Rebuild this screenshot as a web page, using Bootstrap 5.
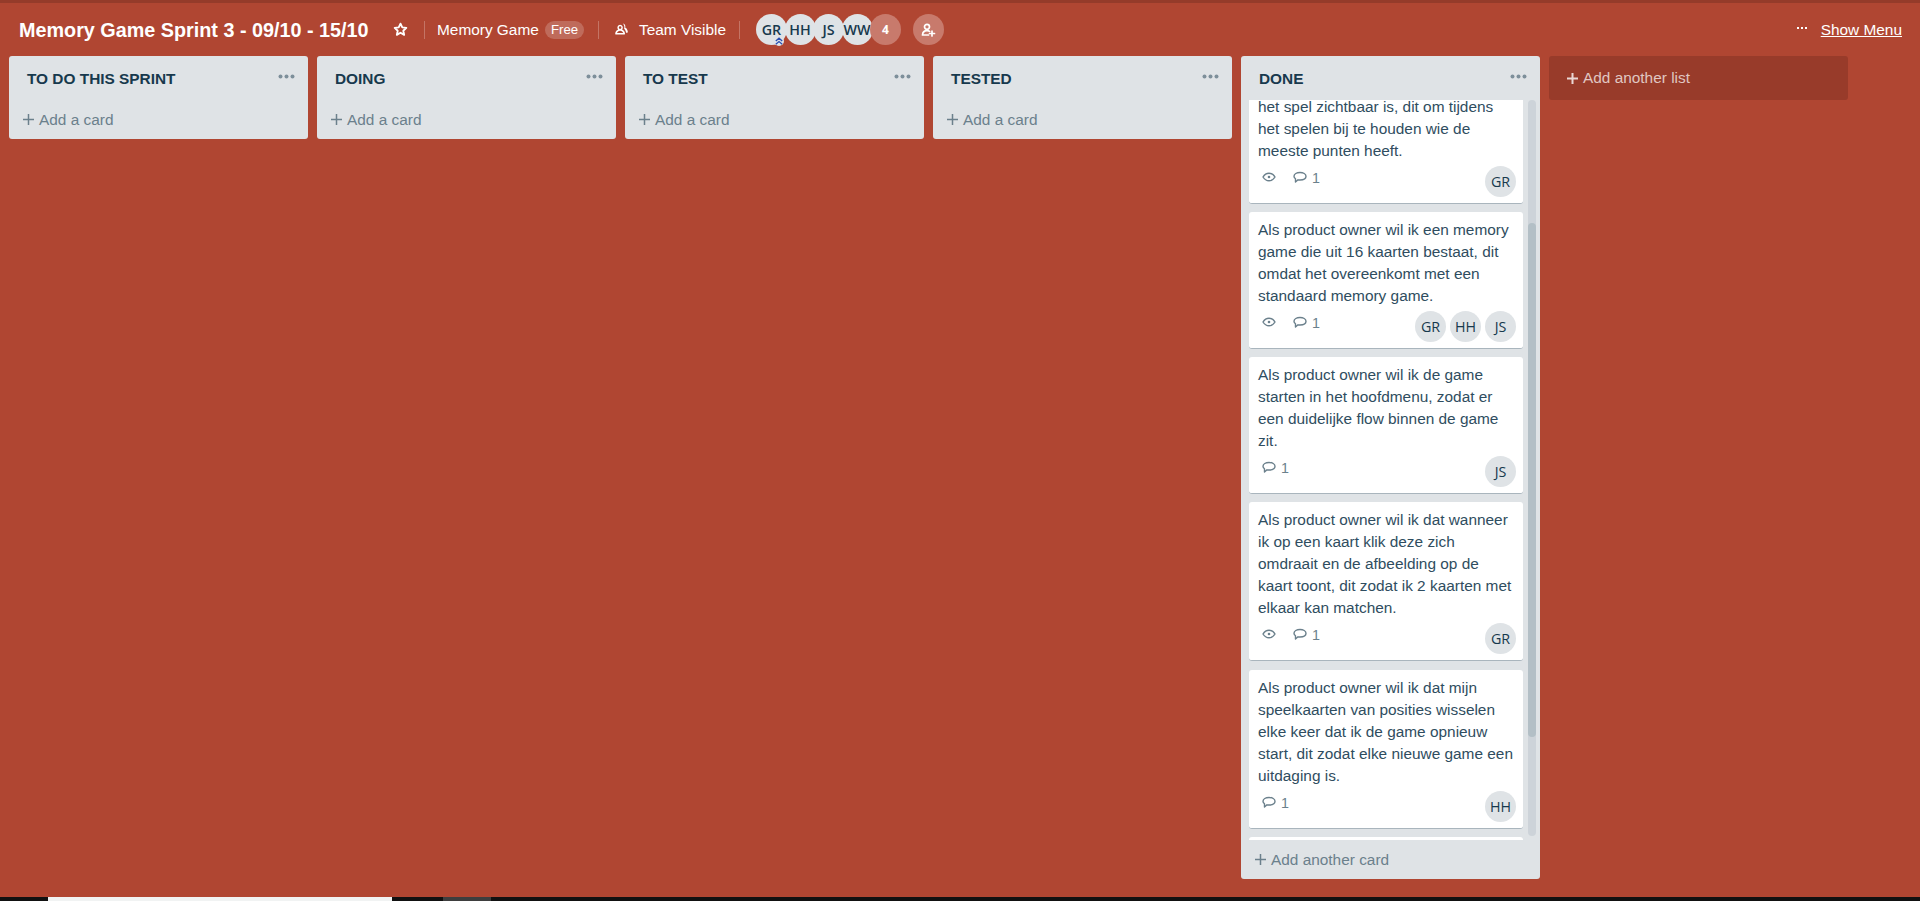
<!DOCTYPE html>
<html lang="nl">
<head>
<meta charset="utf-8">
<title>Memory Game Sprint 3</title>
<link href="https://cdn.jsdelivr.net/npm/bootstrap@5.3.0/dist/css/bootstrap.min.css" rel="stylesheet">
<style>
html,body{height:100%;overflow:hidden}
body{background:#b04632;font-family:"Liberation Sans",Arial,sans-serif;font-size:15.4px;line-height:22px;color:#17394d;border-top:3px solid #953b2a}
.page{height:898px}
.topbar{height:53px;padding-left:19px;padding-right:18px;color:#fff;flex:none}
.board-title{font-size:19.8px;font-weight:700;line-height:24px;margin:0;width:350px;white-space:nowrap}
.sep{width:1px;height:18px;background:rgba(255,255,255,.25);flex:none}
.star-ico{width:15px;height:15px;margin:0 16px 0 24px;flex:none}
.org{margin:0 0 0 12px;width:102px;white-space:nowrap}
.free{background:rgba(255,255,255,.2);font-size:13.2px;font-weight:400;line-height:18px;width:39px;height:18px;padding:0;margin:0 14px 0 6px;text-align:center}
.team-ico{width:13px;height:14px;margin:0 11px 2px 16px;flex:none}
.team{width:87px;margin-right:13px;white-space:nowrap}
.member-row{margin-left:16px}
.ava{width:31px;height:31px;background:#dfe3e6;color:#17394d;font-family:"Open Sans",sans-serif;font-size:14.3px;font-weight:500;line-height:31px;text-align:center;flex:none}
.member-row .ava{margin-right:-2.5px;font-weight:600}
.member-row .ava-more{background:#c87a6c;color:#fff;font-size:12px;font-weight:700}
.chev{position:absolute;left:18px;top:22px;width:10px;height:10px;background:#dfe3e6;border-radius:50%}
.add-member{width:31px;height:31px;background:#c87a6c;margin-left:14.5px;flex:none}
.show-menu{color:#fff;text-decoration:underline}
.dots-w{width:10px;height:4px;margin-right:14px;margin-bottom:4px}
.boardarea{padding:0 0 18px 9px;gap:9px;min-height:0;flex:1 1 auto}
.lane{width:299px;background:#dfe3e6;border-radius:3px;flex:none}
.lane-head{height:44px;padding:0 13px 0 18px;flex:none}
.lane-name{font-size:15.4px;font-weight:700;margin:2px 0 0;line-height:18px}
.dots-g{width:17px;height:5px;margin-bottom:3px}
.lane-foot{height:39px;padding-left:13px;color:#6b808c;flex:none}
.plus-g{width:13px;height:13px;margin-right:4px}
.scrollzone{min-height:0;flex:1 1 auto}
.cards-col{width:274px;margin-left:8px;overflow:hidden;flex:none}
.story{width:274px;background:#fff;border:0;border-bottom:1px solid #a9b5bd;border-radius:3px;margin-bottom:8px;padding:7px 7px 0 9px;color:#2f4d60;flex:none;--bs-card-bg:#fff}
.story-first{margin-top:-4px;padding-top:0;border-top-left-radius:0;border-top-right-radius:0}
.story-tall{margin-bottom:9px}
.story-text{margin:0;white-space:nowrap}
.meta{height:41px;padding-top:4px;align-items:flex-start}
.meta .ava{margin-left:4px}
.badges{color:#6b808c;padding-top:1px;padding-left:4px;font-size:14.3px}
.eye{width:14px;height:10px;margin:5px 17px 0 0}
.bubble{width:14px;height:13px;margin:4px 5px 0 0}
.track{width:8px;height:736px;background:#cdd3d9;border-radius:4px;margin-left:5px;padding-top:123px;flex:none}
.thumb{height:514px;background:#b3bfc6;border-radius:4px}
.add-list{width:299px;height:44px;background:#983b2a;border-radius:3px;color:rgba(255,255,255,.72);padding-left:17px;flex:none}
.plus-w{width:13px;height:13px;margin-right:4px}
.strip{height:4px;background:#111;flex:none}
.strip-a{width:48px}
.strip-b{width:344px;background:#f1f3f3}
.strip-c{width:51px}
.strip-d{width:48px;background:#3e3e3e}
</style>
</head>
<body>
<div class="page d-flex flex-column">
  <header class="topbar d-flex align-items-center">
    <h1 class="board-title">Memory Game Sprint 3 - 09/10 - 15/10</h1>
    <svg class="star-ico" viewBox="0 0 16 16" fill="none" stroke="#fff" stroke-width="2" stroke-linejoin="round"><path d="M8 1.8l1.9 4 4.3.5-3.2 3 .9 4.4L8 11.5l-3.9 2.2.9-4.4-3.2-3 4.3-.5z"/></svg>
    <span class="sep"></span>
    <span class="org">Memory Game</span>
    <span class="badge rounded-pill free">Free</span>
    <span class="sep"></span>
    <svg class="team-ico" viewBox="0 0 14 14" fill="#fff"><path d="M8.600 1.200a2.900 2.900 0 0 1 2.300 4.100c1.400.7 2.600 2.100 2.900 4.600.1.800-.5 1.100-1 1.100h-.9c-.2-2-.9-3.500-2.100-4.400.5-1 .6-3-1.200-5.400z"/><path d="M5.500 2.500a3 3 0 0 1 2.200 5c1.600.7 2.900 2.300 3.100 4.500 0 .6-.4 1-1 1H1.200c-.6 0-1-.4-1-1 .2-2.200 1.500-3.800 3.100-4.500a3 3 0 0 1 2.200-5zm0 1.600a1.400 1.400 0 1 0 0 2.800 1.400 1.400 0 0 0 0-2.800zM2.100 11.400h6.800c-.4-1.400-1.700-2.600-3.400-2.600s-3 1.200-3.400 2.600z" fill-rule="evenodd"/></svg>
    <span class="team">Team Visible</span>
    <span class="sep"></span>
    <div class="member-row d-flex">
      <span class="ava rounded-circle position-relative">GR<svg class="chev" viewBox="0 0 10 10" fill="none" stroke="#2a4fb0" stroke-width="1.300"><path d="M1.800 5L5 2.200 8.200 5M1.800 8.300L5 5.500l3.200 2.800"/></svg></span>
      <span class="ava rounded-circle">HH</span>
      <span class="ava rounded-circle">JS</span>
      <span class="ava rounded-circle">WW</span>
      <span class="ava ava-more rounded-circle">4</span>
    </div>
    <span class="add-member rounded-circle d-flex align-items-center justify-content-center">
      <svg width="15" height="14" viewBox="0 0 15 14" fill="none" stroke="#fff" stroke-width="1.700" stroke-linejoin="round" stroke-linecap="round"><circle cx="6" cy="3.800" r="2.500"/><path d="M1.500 12c.2-2.800 2-4.300 4.500-4.300 1 0 1.900.2 2.600.7M1.500 12h6"/><path d="M11 8v5M8.500 10.500h5"/></svg>
    </span>
    <div class="ms-auto d-flex align-items-center">
      <svg class="dots-w" viewBox="0 0 10 4" fill="#fff"><rect x="0" y="1" width="2" height="2"/><rect x="4" y="1" width="2" height="2"/><rect x="8" y="1" width="2" height="2"/></svg>
      <a class="show-menu" href="#">Show Menu</a>
    </div>
  </header>

  <main class="boardarea d-flex align-items-start">
    <section class="lane d-flex flex-column">
      <div class="lane-head d-flex align-items-center justify-content-between"><h2 class="lane-name">TO DO THIS SPRINT</h2><svg class="dots-g" viewBox="0 0 17 5" fill="#7d8f9a"><circle cx="2.500" cy="2.500" r="2"/><circle cx="8.500" cy="2.500" r="2"/><circle cx="14.500" cy="2.500" r="2"/></svg></div>
      <div class="lane-foot d-flex align-items-center"><svg class="plus-g" viewBox="0 0 13 13" stroke="#6b808c" stroke-width="1.500"><path d="M6.500 1v11M1 6.500h11"/></svg>Add a card</div>
    </section>
    <section class="lane d-flex flex-column">
      <div class="lane-head d-flex align-items-center justify-content-between"><h2 class="lane-name">DOING</h2><svg class="dots-g" viewBox="0 0 17 5" fill="#7d8f9a"><circle cx="2.500" cy="2.500" r="2"/><circle cx="8.500" cy="2.500" r="2"/><circle cx="14.500" cy="2.500" r="2"/></svg></div>
      <div class="lane-foot d-flex align-items-center"><svg class="plus-g" viewBox="0 0 13 13" stroke="#6b808c" stroke-width="1.500"><path d="M6.500 1v11M1 6.500h11"/></svg>Add a card</div>
    </section>
    <section class="lane d-flex flex-column">
      <div class="lane-head d-flex align-items-center justify-content-between"><h2 class="lane-name">TO TEST</h2><svg class="dots-g" viewBox="0 0 17 5" fill="#7d8f9a"><circle cx="2.500" cy="2.500" r="2"/><circle cx="8.500" cy="2.500" r="2"/><circle cx="14.500" cy="2.500" r="2"/></svg></div>
      <div class="lane-foot d-flex align-items-center"><svg class="plus-g" viewBox="0 0 13 13" stroke="#6b808c" stroke-width="1.500"><path d="M6.500 1v11M1 6.500h11"/></svg>Add a card</div>
    </section>
    <section class="lane d-flex flex-column">
      <div class="lane-head d-flex align-items-center justify-content-between"><h2 class="lane-name">TESTED</h2><svg class="dots-g" viewBox="0 0 17 5" fill="#7d8f9a"><circle cx="2.500" cy="2.500" r="2"/><circle cx="8.500" cy="2.500" r="2"/><circle cx="14.500" cy="2.500" r="2"/></svg></div>
      <div class="lane-foot d-flex align-items-center"><svg class="plus-g" viewBox="0 0 13 13" stroke="#6b808c" stroke-width="1.500"><path d="M6.500 1v11M1 6.500h11"/></svg>Add a card</div>
    </section>

    <section class="lane d-flex flex-column align-self-stretch">
      <div class="lane-head d-flex align-items-center justify-content-between"><h2 class="lane-name">DONE</h2><svg class="dots-g" viewBox="0 0 17 5" fill="#7d8f9a"><circle cx="2.500" cy="2.500" r="2"/><circle cx="8.500" cy="2.500" r="2"/><circle cx="14.500" cy="2.500" r="2"/></svg></div>
      <div class="scrollzone d-flex">
        <div class="cards-col d-flex flex-column">
          <article class="card story story-first">
            <p class="story-text">het spel zichtbaar is, dit om tijdens<br>het spelen bij te houden wie de<br>meeste punten heeft.</p>
            <div class="meta d-flex">
              <div class="badges d-flex align-items-start"><svg class="eye" viewBox="0 0 14 10" fill="none" stroke="#6b808c" stroke-width="1.400"><path d="M1 5c1.500-2.500 3.500-3.800 6-3.800S11.500 2.500 13 5c-1.500 2.500-3.500 3.800-6 3.800S2.500 7.500 1 5z"/><circle cx="7" cy="5" r="1.300" fill="#6b808c" stroke="none"/></svg><svg class="bubble" viewBox="0 0 14 13" fill="none" stroke="#6b808c" stroke-width="1.400" stroke-linejoin="round"><path d="M7 1.500c3.300 0 6 1.500 6 3.800S10.300 9 7 9c-.7 0-1.400 0-2-.2L2.500 11V7.800C1.500 7.100 1 6.300 1 5.300 1 3 3.700 1.500 7 1.500z"/></svg><span>1</span></div>
              <div class="ms-auto d-flex"><span class="ava rounded-circle">GR</span></div>
            </div>
          </article>
          <article class="card story">
            <p class="story-text">Als product owner wil ik een memory<br>game die uit 16 kaarten bestaat, dit<br>omdat het overeenkomt met een<br>standaard memory game.</p>
            <div class="meta d-flex">
              <div class="badges d-flex align-items-start"><svg class="eye" viewBox="0 0 14 10" fill="none" stroke="#6b808c" stroke-width="1.400"><path d="M1 5c1.500-2.500 3.500-3.800 6-3.800S11.500 2.500 13 5c-1.500 2.500-3.500 3.800-6 3.800S2.500 7.500 1 5z"/><circle cx="7" cy="5" r="1.300" fill="#6b808c" stroke="none"/></svg><svg class="bubble" viewBox="0 0 14 13" fill="none" stroke="#6b808c" stroke-width="1.400" stroke-linejoin="round"><path d="M7 1.500c3.300 0 6 1.500 6 3.800S10.300 9 7 9c-.7 0-1.400 0-2-.2L2.500 11V7.800C1.500 7.100 1 6.300 1 5.300 1 3 3.700 1.500 7 1.500z"/></svg><span>1</span></div>
              <div class="ms-auto d-flex"><span class="ava rounded-circle">GR</span><span class="ava rounded-circle">HH</span><span class="ava rounded-circle">JS</span></div>
            </div>
          </article>
          <article class="card story">
            <p class="story-text">Als product owner wil ik de game<br>starten in het hoofdmenu, zodat er<br>een duidelijke flow binnen de game<br>zit.</p>
            <div class="meta d-flex">
              <div class="badges d-flex align-items-start"><svg class="bubble" viewBox="0 0 14 13" fill="none" stroke="#6b808c" stroke-width="1.400" stroke-linejoin="round"><path d="M7 1.500c3.300 0 6 1.500 6 3.800S10.300 9 7 9c-.7 0-1.400 0-2-.2L2.500 11V7.800C1.500 7.100 1 6.300 1 5.300 1 3 3.700 1.500 7 1.500z"/></svg><span>1</span></div>
              <div class="ms-auto d-flex"><span class="ava rounded-circle">JS</span></div>
            </div>
          </article>
          <article class="card story story-tall">
            <p class="story-text">Als product owner wil ik dat wanneer<br>ik op een kaart klik deze zich<br>omdraait en de afbeelding op de<br>kaart toont, dit zodat ik 2 kaarten met<br>elkaar kan matchen.</p>
            <div class="meta d-flex">
              <div class="badges d-flex align-items-start"><svg class="eye" viewBox="0 0 14 10" fill="none" stroke="#6b808c" stroke-width="1.400"><path d="M1 5c1.500-2.500 3.500-3.800 6-3.800S11.500 2.500 13 5c-1.500 2.500-3.500 3.800-6 3.800S2.500 7.500 1 5z"/><circle cx="7" cy="5" r="1.300" fill="#6b808c" stroke="none"/></svg><svg class="bubble" viewBox="0 0 14 13" fill="none" stroke="#6b808c" stroke-width="1.400" stroke-linejoin="round"><path d="M7 1.500c3.300 0 6 1.500 6 3.800S10.300 9 7 9c-.7 0-1.400 0-2-.2L2.500 11V7.800C1.500 7.100 1 6.300 1 5.300 1 3 3.700 1.500 7 1.500z"/></svg><span>1</span></div>
              <div class="ms-auto d-flex"><span class="ava rounded-circle">GR</span></div>
            </div>
          </article>
          <article class="card story">
            <p class="story-text">Als product owner wil ik dat mijn<br>speelkaarten van posities wisselen<br>elke keer dat ik de game opnieuw<br>start, dit zodat elke nieuwe game een<br>uitdaging is.</p>
            <div class="meta d-flex">
              <div class="badges d-flex align-items-start"><svg class="bubble" viewBox="0 0 14 13" fill="none" stroke="#6b808c" stroke-width="1.400" stroke-linejoin="round"><path d="M7 1.500c3.300 0 6 1.500 6 3.800S10.300 9 7 9c-.7 0-1.400 0-2-.2L2.500 11V7.800C1.500 7.100 1 6.300 1 5.300 1 3 3.700 1.500 7 1.500z"/></svg><span>1</span></div>
              <div class="ms-auto d-flex"><span class="ava rounded-circle">HH</span></div>
            </div>
          </article>
          <article class="card story"><p class="story-text">&nbsp;</p></article>
        </div>
        <div class="track"><div class="thumb"></div></div>
      </div>
      <div class="lane-foot d-flex align-items-center"><svg class="plus-g" viewBox="0 0 13 13" stroke="#6b808c" stroke-width="1.500"><path d="M6.500 1v11M1 6.500h11"/></svg>Add another card</div>
    </section>

    <div class="add-list d-flex align-items-center"><svg class="plus-w" viewBox="0 0 13 13" stroke="#fff" stroke-opacity=".8" stroke-width="2"><path d="M6.500 1v11M1 6.500h11"/></svg>Add another list</div>
  </main>

  <div class="strip d-flex"><span class="strip-a"></span><span class="strip-b"></span><span class="strip-c"></span><span class="strip-d"></span></div>
</div>
<script src="https://cdn.jsdelivr.net/npm/bootstrap@5.3.0/dist/js/bootstrap.bundle.min.js"></script>
</body>
</html>
